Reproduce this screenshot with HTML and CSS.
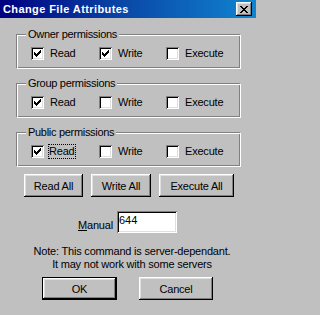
FILE: index.html
```html
<!DOCTYPE html>
<html>
<head>
<meta charset="utf-8">
<link rel="stylesheet" href="styles.css">
</head>
<body>
<div class="dialog">
  <div class="titlebar">
    <span class="title">Change File Attributes</span>
    <span class="close-btn">
      <svg width="8" height="7" viewBox="0 0 8 7" shape-rendering="crispEdges"><path d="M0 0h2v1h-2zM6 0h2v1h-2zM1 1h2v1h-2zM5 1h2v1h-2zM2 2h4v1h-4zM3 3h2v1h-2zM2 4h4v1h-4zM1 5h2v1h-2zM5 5h2v1h-2zM0 6h2v1h-2zM6 6h2v1h-2z" fill="#000"/></svg>
    </span>
  </div>

  <div class="group first">
    <div class="legend">Owner permissions</div>
    <div class="row">
      <label class="check"><span class="box on"><svg width="7" height="7" viewBox="0 0 7 7" shape-rendering="crispEdges"><path d="M6 0h1v1h-1zM5 1h2v1h-2zM0 2h1v1h-1zM4 2h3v1h-3zM0 3h2v1h-2zM3 3h3v1h-3zM0 4h5v1h-5zM1 5h3v1h-3zM2 6h1v1h-1z" fill="#000"/></svg></span><span class="lbl">Read</span></label>
      <label class="check"><span class="box on"><svg width="7" height="7" viewBox="0 0 7 7" shape-rendering="crispEdges"><path d="M6 0h1v1h-1zM5 1h2v1h-2zM0 2h1v1h-1zM4 2h3v1h-3zM0 3h2v1h-2zM3 3h3v1h-3zM0 4h5v1h-5zM1 5h3v1h-3zM2 6h1v1h-1z" fill="#000"/></svg></span><span class="lbl">Write</span></label>
      <label class="check"><span class="box"></span><span class="lbl">Execute</span></label>
    </div>
  </div>

  <div class="group">
    <div class="legend">Group permissions</div>
    <div class="row">
      <label class="check"><span class="box on"><svg width="7" height="7" viewBox="0 0 7 7" shape-rendering="crispEdges"><path d="M6 0h1v1h-1zM5 1h2v1h-2zM0 2h1v1h-1zM4 2h3v1h-3zM0 3h2v1h-2zM3 3h3v1h-3zM0 4h5v1h-5zM1 5h3v1h-3zM2 6h1v1h-1z" fill="#000"/></svg></span><span class="lbl">Read</span></label>
      <label class="check"><span class="box"></span><span class="lbl">Write</span></label>
      <label class="check"><span class="box"></span><span class="lbl">Execute</span></label>
    </div>
  </div>

  <div class="group">
    <div class="legend">Public permissions</div>
    <div class="row">
      <label class="check"><span class="box on"><svg width="7" height="7" viewBox="0 0 7 7" shape-rendering="crispEdges"><path d="M6 0h1v1h-1zM5 1h2v1h-2zM0 2h1v1h-1zM4 2h3v1h-3zM0 3h2v1h-2zM3 3h3v1h-3zM0 4h5v1h-5zM1 5h3v1h-3zM2 6h1v1h-1z" fill="#000"/></svg></span><span class="lbl focus">Read</span></label>
      <label class="check"><span class="box"></span><span class="lbl">Write</span></label>
      <label class="check"><span class="box"></span><span class="lbl">Execute</span></label>
    </div>
  </div>

  <div class="btn-row">
    <span class="btn w59">Read All</span>
    <span class="btn w60">Write All</span>
    <span class="btn w75">Execute All</span>
  </div>

  <div class="manual-row">
    <span class="manual-lbl"><u>M</u>anual</span>
    <input class="field" type="text" value="644">
  </div>

  <div class="note">
    <div>Note: This command is server-dependant.</div>
    <div>It may not work with some servers</div>
  </div>

  <div class="action-row">
    <span class="btn w75 default">OK</span>
    <span class="btn w74">Cancel</span>
  </div>
</div>
</body>
</html>
```

FILE: styles.css
```css
html, body {
  margin: 0;
  padding: 0;
  background: #c0c0c0;
}

.dialog {
  width: 256px;
  height: 315px;
  background: #c0c0c0;
  font-family: "Liberation Sans", Arial, sans-serif;
  font-size: 11px;
  color: #000;
  overflow: hidden;
}

.titlebar {
  height: 18px;
  display: flex;
  align-items: center;
  justify-content: space-between;
  padding: 0 4px 0 3px;
  background: linear-gradient(90deg, #000080 0%, #0a4aa8 50%, #1084d0 100%);
}

.title {
  color: #fff;
  font-weight: bold;
  font-size: 11px;
  letter-spacing: 0.4px;
  line-height: 18px;
}

.close-btn {
  width: 16px;
  height: 14px;
  box-sizing: border-box;
  background: #c0c0c0;
  box-shadow: inset -1px -1px #000, inset 1px 1px #fff, inset -2px -2px #808080, inset 2px 2px #dfdfdf;
  display: flex;
  align-items: center;
  justify-content: center;
  padding-left: 0;
}

.close-btn svg { display: block; }

.group {
  margin: 14px 15px 0 16px;
  height: 35px;
  box-sizing: border-box;
  border: 1px solid;
  border-color: #808080 #fff #fff #808080;
  box-shadow: inset 1px 1px #fff, inset -1px -1px #808080;
  padding: 0 0 0 14px;
}

.group.first { margin-top: 16px; }

.legend {
  margin: -7px 0 0 -5px;
  width: fit-content;
  padding: 0 2px;
  background: #c0c0c0;
  line-height: 13px;
  height: 13px;
  letter-spacing: -0.3px;
}

.row {
  display: grid;
  grid-template-columns: 68px 67px auto;
  margin-top: 6px;
}

.check {
  display: flex;
  align-items: center;
  height: 13px;
}

.box {
  width: 13px;
  height: 13px;
  box-sizing: border-box;
  background: #fff;
  box-shadow: inset 1px 1px #808080, inset -1px -1px #fff, inset 2px 2px #000, inset -2px -2px #dfdfdf;
  display: flex;
  align-items: center;
  justify-content: center;
  flex: none;
}

.box svg { display: block; }

.lbl {
  margin-left: 5px;
  line-height: 13px;
  padding: 1px 1px;
  letter-spacing: -0.2px;
}

.lbl.focus {
  margin-left: 4px;
  padding: 0 0;
  border: 1px dotted #000;
}

.btn-row {
  display: flex;
  gap: 8px;
  margin: 7px 0 0 24px;
}

.btn {
  height: 23px;
  box-sizing: border-box;
  background: #c0c0c0;
  box-shadow: inset -1px -1px #000, inset 1px 1px #fff, inset -2px -2px #808080, inset 2px 2px #dfdfdf;
  display: flex;
  align-items: center;
  justify-content: center;
  letter-spacing: -0.2px;
}

.w59 { width: 59px; }
.w60 { width: 60px; }
.w74 { width: 74px; }
.w75 { width: 75px; }

.btn.default {
  border: 1px solid #000;
}

.manual-row {
  display: flex;
  align-items: center;
  gap: 4px;
  margin: 14px 0 0 78px;
}

.manual-lbl {
  letter-spacing: -0.2px;
  padding-top: 6px;
}

.field {
  width: 60px;
  height: 22px;
  box-sizing: border-box;
  margin: 0;
  border: none;
  outline: none;
  background: #fff;
  box-shadow: inset 1px 1px #808080, inset -1px -1px #fff, inset 2px 2px #000, inset -2px -2px #dfdfdf;
  font-family: "Liberation Sans", Arial, sans-serif;
  font-size: 11px;
  color: #000;
  padding: 0 2px 4px 2px;
}

.note {
  margin-top: 12px;
  padding-left: 8px;
  text-align: center;
  line-height: 13px;
  letter-spacing: -0.2px;
}

.action-row {
  display: flex;
  gap: 22px;
  margin: 6px 0 0 42px;
}
```
